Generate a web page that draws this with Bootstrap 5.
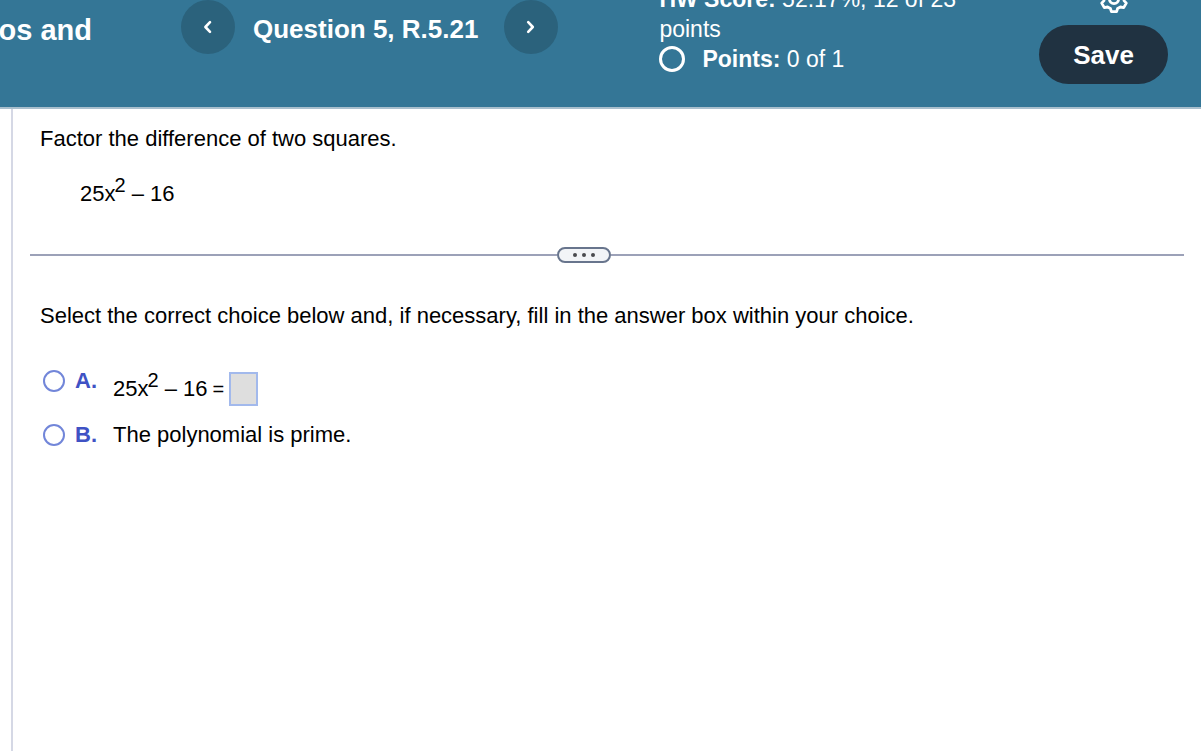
<!DOCTYPE html>
<html lang="en">
<head>
<meta charset="utf-8">
<meta name="viewport" content="width=device-width, initial-scale=1">
<title>Question 5, R.5.21</title>
<link href="https://cdn.jsdelivr.net/npm/bootstrap@5.3.0/dist/css/bootstrap.min.css" rel="stylesheet">
<style>
  body { font-family: "Liberation Sans", Arial, sans-serif; font-size: 22px; line-height: 30px; color: #000; background: #fff; }
  .top-bar { height: 109px; border-bottom: 2px solid #a9bfcd; background: #347696; color: #fff; }
  .assignment-name { width: 92px; font-size: 29px; line-height: 60px; white-space: nowrap; }
  .question-nav { margin-left: 89px; }
  .step-btn { width: 54px; height: 54px; background: #2b627c; }
  .step-btn:hover { background: #255870; }
  .question-title { font-size: 26px; line-height: 58px; margin: 0 26px 0 18px; white-space: nowrap; }
  .score-block { width: 320px; font-size: 23px; margin: -16px 0 0 101px; }
  .points-ring { width: 26px; height: 26px; border: 3px solid #fff; margin-right: 17px; }
  .side-tools { margin-right: 33px; }
  .gear-btn { margin: -17px 38px 0 0; line-height: 0; }
  .save-btn { width: 129px; height: 59px; margin-top: 10px; background: #203241; font-size: 26px; line-height: 32px; }
  .save-btn:hover { background: #2a4052; }
  .work-area { margin-left: 11px; border-left: 2px solid #d5d8e5; padding: 15px 17px 0; }
  .inset { padding-left: 10px; }
  .problem { padding-left: 50px; margin-top: 25px; }
  .expr { white-space: nowrap; }
  .expr sup { font-size: 20px; top: -9px; line-height: 0; vertical-align: baseline; margin-left: -1px; }
  .split { height: 16px; margin: 38px 0; }
  .split-line { height: 2px; background: #9ca1b8; }
  .split-before { flex: 23 1 0; }
  .split-after { flex: 25 1 0; }
  .split-btn { width: 54px; height: 16px; border: 2px solid #68758d; background: #f2f4f7; gap: 5px; }
  .dot { width: 4px; height: 4px; background: #4a4a4e; }
  .choice { margin-top: 39px; }
  .choice + .choice { margin-top: 14px; }
  .choice-pick { width: 73px; line-height: 22px; }
  .choice-pick input { appearance: none; width: 22px; height: 22px; border: 2px solid #7286d9; border-radius: 50%; margin: 0 10px 0 3px; background: #fff; }
  .choice-pick input:checked { background: #7286d9; box-shadow: inset 0 0 0 3px #fff; }
  .choice-pick label { color: #3f52c4; font-weight: 700; }
  .choice .expr { gap: 5px; padding-top: 2px; }
  .equals { font-size: 20px; }
  .answer-box { width: 29px; height: 34px; border: 2px solid #a2b9ec; border-radius: 0; background: #dedede; padding: 0; }
</style>
<script src="https://cdn.jsdelivr.net/npm/bootstrap@5.3.0/dist/js/bootstrap.bundle.min.js"></script>
</head>
<body class="d-flex flex-column min-vh-100">
<header class="top-bar d-flex align-items-start overflow-hidden">
  <div class="assignment-name d-flex justify-content-end overflow-hidden fw-bold flex-shrink-0">os and</div>
  <nav class="question-nav d-flex align-items-start flex-shrink-0" aria-label="Question navigation">
    <button type="button" class="step-btn btn p-0 border-0 rounded-circle d-flex align-items-center justify-content-center" aria-label="Previous question">
      <svg width="10" height="14" viewBox="0 0 10 14" fill="none" stroke="#fff" stroke-width="2.6" stroke-linecap="round" stroke-linejoin="round"><path d="M7 2.2 2.4 7 7 11.8"/></svg>
    </button>
    <h1 class="question-title fw-bold">Question 5, R.5.21</h1>
    <button type="button" class="step-btn btn p-0 border-0 rounded-circle d-flex align-items-center justify-content-center" aria-label="Next question">
      <svg width="10" height="14" viewBox="0 0 10 14" fill="none" stroke="#fff" stroke-width="2.6" stroke-linecap="round" stroke-linejoin="round"><path d="M2.2 2.2 6.8 7 2.2 11.8"/></svg>
    </button>
  </nav>
  <div class="score-block flex-shrink-0">
    <div><strong>HW Score:</strong> 52.17%, 12 of 23 points</div>
    <div class="d-flex align-items-center"><span class="points-ring rounded-circle"></span><span><strong>Points:</strong> 0 of 1</span></div>
  </div>
  <div class="side-tools ms-auto d-flex flex-column align-items-end">
    <button type="button" class="gear-btn btn p-0 border-0" aria-label="Settings">
      <svg width="32" height="32" viewBox="-16 -16 32 32" fill="none" stroke="#fff" stroke-width="2.8" stroke-linejoin="round"><path d="M-2.6 12.7H2.6L3.6 9.5 6.4 8 9.7 8.6 12.3 4.1 10 1.6V-1.6L12.3-4.1 9.7-8.6 6.4-8 3.6-9.5 2.6-12.7H-2.6L-3.6-9.5-6.4-8-9.7-8.6-12.3-4.1-10-1.6V1.6L-12.3 4.1-9.7 8.6-6.4 8-3.6 9.5Z"/><circle r="4.6"/></svg>
    </button>
    <button type="button" class="save-btn btn p-0 border-0 rounded-pill fw-bold text-white">Save</button>
  </div>
</header>
<main class="work-area flex-grow-1">
  <p class="inset mb-0">Factor the difference of two squares.</p>
  <p class="problem expr mb-0">25x<sup>2</sup> – 16</p>
  <div class="split d-flex align-items-center">
    <div class="split-line split-before"></div>
    <button type="button" class="split-btn btn p-0 rounded-pill d-flex align-items-center justify-content-center" aria-label="Resize question panel"><span class="dot rounded-circle"></span><span class="dot rounded-circle"></span><span class="dot rounded-circle"></span></button>
    <div class="split-line split-after"></div>
  </div>
  <p class="inset mb-0">Select the correct choice below and, if necessary, fill in the answer box within your choice.</p>
  <div class="choice inset d-flex align-items-start">
    <div class="choice-pick d-flex align-items-center flex-shrink-0">
      <input type="radio" name="choice" id="choiceA">
      <label for="choiceA">A.</label>
    </div>
    <div class="expr d-flex align-items-center"><span>25x<sup>2</sup> – 16</span><span class="equals">=</span><input class="answer-box" type="text" aria-label="Answer"></div>
  </div>
  <div class="choice inset d-flex align-items-center">
    <div class="choice-pick d-flex align-items-center flex-shrink-0">
      <input type="radio" name="choice" id="choiceB">
      <label for="choiceB">B.</label>
    </div>
    <label for="choiceB">The polynomial is prime.</label>
  </div>
</main>
</body>
</html>
